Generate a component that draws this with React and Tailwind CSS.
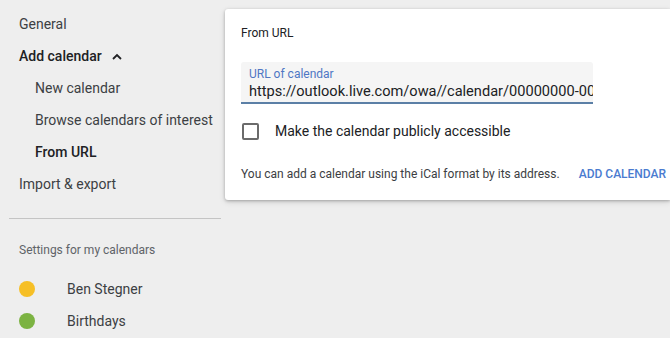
export default function App() {
  return (
    <div className="w-[670px] h-[338px] overflow-hidden bg-[#eeeeee] flex" style={{ fontFamily: "Roboto, 'Liberation Sans', sans-serif" }}>
      <div className="w-[225px] shrink-0 flex flex-col pt-[8px]">
        <div className="h-8 flex items-center pl-[19px] text-[14px] text-[#3c4043]">General</div>
        <div className="h-8 flex items-center pl-[19px] text-[14px] text-[#202124] font-medium">
          Add calendar
          <svg className="ml-[10px]" width="10" height="7" viewBox="0 0 10 7"><path d="M1 6 L5 2 L9 6" fill="none" stroke="#202124" strokeWidth="1.8" /></svg>
        </div>
        <div className="h-8 flex items-center pl-[35px] text-[14px] text-[#3c4043]">New calendar</div>
        <div className="h-8 flex items-center pl-[35px] text-[14px] text-[#3c4043]">Browse calendars of interest</div>
        <div className="h-8 flex items-center pl-[35px] text-[14px] text-[#202124] font-medium">From URL</div>
        <div className="h-8 flex items-center pl-[19px] text-[14px] text-[#3c4043]">Import &amp; export</div>
        <div className="mt-[18px] ml-[9px] mr-[4px] h-px bg-[#c4c4c4]"></div>
        <div className="mt-[22px] pl-[19px] text-[12px] text-[#5f6368]">Settings for my calendars</div>
        <div className="mt-[14px] h-8 flex items-center pl-[19px] text-[14px] text-[#3c4043]">
          <span className="w-4 h-4 rounded-full bg-[#f6bf26] mr-[32px]"></span>Ben Stegner
        </div>
        <div className="h-8 flex items-center pl-[19px] text-[14px] text-[#3c4043]">
          <span className="w-4 h-4 rounded-full bg-[#7cb342] mr-[32px]"></span>Birthdays
        </div>
      </div>
      <div className="mt-[9px] h-[191px] flex-1 bg-white rounded-l-[3px] shadow-[0_1px_3px_rgba(0,0,0,0.25),0_2px_6px_rgba(0,0,0,0.12)] pl-4 pt-[16px] whitespace-nowrap">
        <div className="text-[12px] text-[#202124] leading-[16px]">From URL</div>
        <div className="mt-[21px] w-[352px] h-[42px] bg-[#f5f5f5] rounded-t-[3px] border-b-2 border-[#5b7fa6] px-2 pt-[5px] overflow-hidden">
          <div className="text-[12px] leading-[14px] text-[#4f77c4]">URL of calendar</div>
          <div className="text-[14.6px] leading-[20px] text-[#202124]">https://outlook.live.com/owa//calendar/00000000-0000</div>
        </div>
        <div className="mt-[17px] flex items-center h-[20px]">
          <span className="w-[17px] h-[17px] ml-px rounded-[2px] border-2 border-[#6b6b6b]"></span>
          <span className="ml-[16px] text-[14px] text-[#202124]">Make the calendar publicly accessible</span>
        </div>
        <div className="mt-[25px] flex items-center h-4">
          <span className="text-[12px] text-[#3c4043]">You can add a calendar using the iCal format by its address.</span>
          <span className="ml-[19px] text-[12px] font-medium text-[#4a7bd0]">ADD CALENDAR</span>
        </div>
      </div>
    </div>
  );
}
